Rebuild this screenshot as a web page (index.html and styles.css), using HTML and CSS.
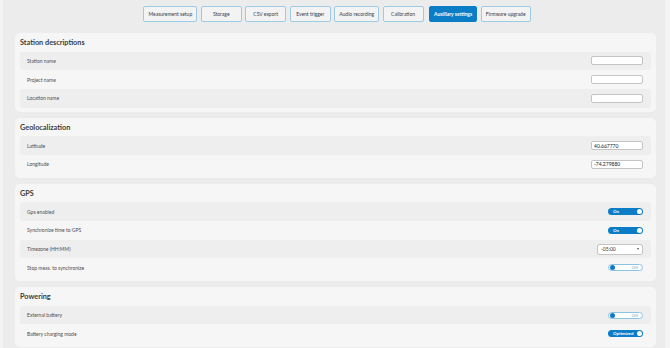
FILE: index.html
```html
<html lang="en">
   <head>
      <meta charset="UTF-8">
      <title>Auxiliary settings</title>
      <link rel="stylesheet" href="styles.css">
   </head>
   <body>
      <div class="page">
         <nav class="tabs">
            <button class="tab">Measurement setup</button>
            <button class="tab">Storage</button>
            <button class="tab">CSV export</button>
            <button class="tab">Event trigger</button>
            <button class="tab">Audio recording</button>
            <button class="tab">Calibration</button>
            <button class="tab active">Auxiliary settings</button>
            <button class="tab">Firmware upgrade</button>
         </nav>

         <section class="card">
            <h2>Station descriptions</h2>
            <div class="row"><span class="label">Station name</span><input class="field" type="text"></div>
            <div class="row"><span class="label">Project name</span><input class="field" type="text"></div>
            <div class="row"><span class="label">Location name</span><input class="field" type="text"></div>
         </section>

         <section class="card">
            <h2>Geolocalization</h2>
            <div class="row"><span class="label">Latitude</span><input class="field" type="text" value="40.667770"></div>
            <div class="row"><span class="label">Longitude</span><input class="field" type="text" value="-74.279880"></div>
         </section>

         <section class="card">
            <h2>GPS</h2>
            <div class="row"><span class="label">Gps enabled</span><span class="toggle on"><span class="txt">On</span><span class="knob"></span></span></div>
            <div class="row"><span class="label">Synchronize time to GPS</span><span class="toggle on"><span class="txt">On</span><span class="knob"></span></span></div>
            <div class="row"><span class="label">Timezone (HH:MM)</span><span class="select"><span>-05:00</span><span class="caret"></span></span></div>
            <div class="row"><span class="label">Stop meas. to synchronize</span><span class="toggle off"><span class="knob"></span><span class="txt">Off</span></span></div>
         </section>

         <section class="card">
            <h2>Powering</h2>
            <div class="row"><span class="label">External battery</span><span class="toggle off"><span class="knob"></span><span class="txt">Off</span></span></div>
            <div class="row"><span class="label">Battery charging mode</span><span class="toggle on"><span class="txt">Optimized</span><span class="knob"></span></span></div>
         </section>
      </div>
   </body>
</html>
```

FILE: styles.css
```css
body {
margin: 0;
background-color: #f4f4f4;
font-family: Lato, "Open Sans", sans-serif;
overflow: hidden;
}
.page {
margin: 0 5px 0 3px;
padding: 6px 9px 0 12px;
background-color: #ececec;
min-height: 100vh;
}
.tabs {
display: flex;
justify-content: center;
gap: 3.5px;
height: 16px;
margin: 0 0 11px 3px;
}
.tab {
min-width: 41px;
height: 16px;
padding: 0 4px;
font-family: inherit;
font-size: 5px;
color: #34414f;
background-color: #f3f3f3;
border: 1px solid #9ccbe8;
border-radius: 2px;
}
.tab.active {
margin-left: 2px;
background-color: #0b7cc6;
border-color: #0b7cc6;
color: #fff;
font-weight: bold;
}
.card {
background-color: #f6f6f6;
border-radius: 5px;
padding: 0 5px 4px;
margin-bottom: 6.2px;
}
.card h2 {
margin: 0;
height: 18.5px;
line-height: 20px;
font-size: 7.3px;
font-weight: bold;
color: #3c3c3c;
}
.row {
display: flex;
justify-content: space-between;
align-items: center;
height: 18.7px;
padding: 0 8px 0 7px;
border-radius: 3px;
}
.row:nth-of-type(odd) {
background-color: #eeeeee;
}
.label {
font-size: 5px;
color: #4e4e4e;
}
.field {
width: 52px;
height: 9px;
padding: 0 2px;
font-family: inherit;
font-size: 5px;
color: #222;
background-color: #fff;
border: 1px solid #c4c4c4;
border-radius: 2px;
box-sizing: border-box;
}
.toggle {
display: flex;
justify-content: space-between;
align-items: center;
width: 35px;
height: 7px;
box-sizing: border-box;
border-radius: 4px;
font-size: 4.4px;
font-weight: bold;
}
.toggle .knob {
width: 5px;
height: 5px;
border-radius: 50%;
}
.toggle.on {
background-color: #0b7cc6;
padding: 0 1px 0 5px;
color: #fff;
}
.toggle.on .knob {
background-color: #fff;
}
.toggle.off {
background-color: #fff;
border: 1px solid #8fc1e3;
padding: 0 4px 0 0.5px;
color: #9cc0da;
}
.toggle.off .knob {
background-color: #0b7cc6;
}
.select {
display: flex;
justify-content: space-between;
align-items: center;
width: 46px;
height: 11px;
padding: 0 3px;
box-sizing: border-box;
background-color: #fff;
border: 1px solid #c4c4c4;
border-radius: 2px;
font-size: 5px;
color: #333;
}
.caret {
width: 0;
height: 0;
border-left: 1.5px solid transparent;
border-right: 1.5px solid transparent;
border-top: 2px solid #555;
}
```
